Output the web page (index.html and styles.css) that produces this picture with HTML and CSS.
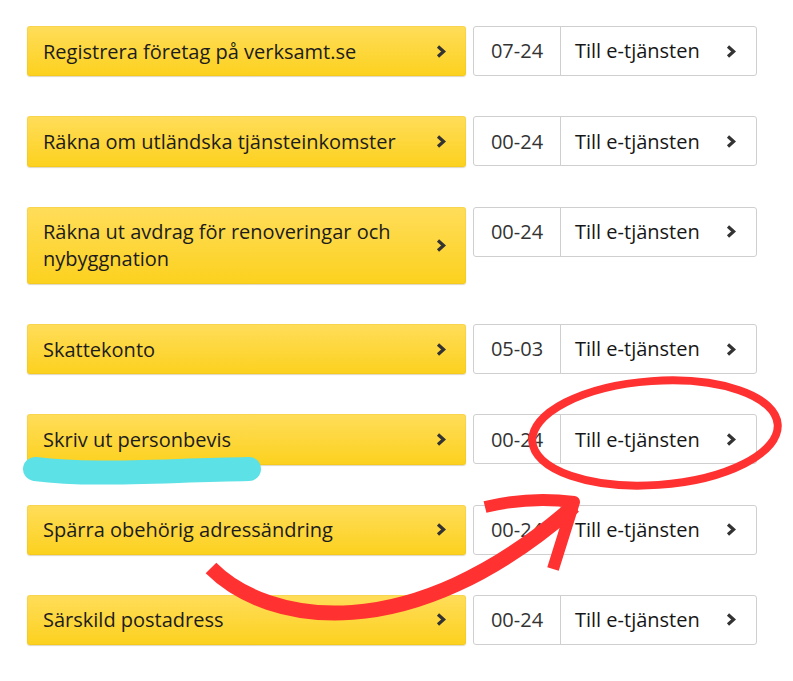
FILE: index.html
```html
<!DOCTYPE html>
<html lang="sv">
<head>
<meta charset="utf-8">
<title>E-tjänster</title>
<link rel="stylesheet" href="styles.css">
</head>
<body>
<main class="list">
  <div class="row">
    <a class="service" href="#"><span class="service-label">Registrera företag på verksamt.se</span><svg class="chev" viewBox="0 0 10 13"><path d="M2 1.5 L7.6 6.5 L2 11.5"/></svg></a>
    <div class="box"><span class="hours">07-24</span><a class="go" href="#"><span>Till e-tjänsten</span><svg class="chev" viewBox="0 0 10 13"><path d="M2 1.5 L7.6 6.5 L2 11.5"/></svg></a></div>
  </div>
  <div class="row">
    <a class="service" href="#"><span class="service-label">Räkna om utländska tjänsteinkomster</span><svg class="chev" viewBox="0 0 10 13"><path d="M2 1.5 L7.6 6.5 L2 11.5"/></svg></a>
    <div class="box"><span class="hours">00-24</span><a class="go" href="#"><span>Till e-tjänsten</span><svg class="chev" viewBox="0 0 10 13"><path d="M2 1.5 L7.6 6.5 L2 11.5"/></svg></a></div>
  </div>
  <div class="row">
    <a class="service" href="#"><span class="service-label">Räkna ut avdrag för renoveringar och nybyggnation</span><svg class="chev" viewBox="0 0 10 13"><path d="M2 1.5 L7.6 6.5 L2 11.5"/></svg></a>
    <div class="box"><span class="hours">00-24</span><a class="go" href="#"><span>Till e-tjänsten</span><svg class="chev" viewBox="0 0 10 13"><path d="M2 1.5 L7.6 6.5 L2 11.5"/></svg></a></div>
  </div>
  <div class="row">
    <a class="service" href="#"><span class="service-label">Skattekonto</span><svg class="chev" viewBox="0 0 10 13"><path d="M2 1.5 L7.6 6.5 L2 11.5"/></svg></a>
    <div class="box"><span class="hours">05-03</span><a class="go" href="#"><span>Till e-tjänsten</span><svg class="chev" viewBox="0 0 10 13"><path d="M2 1.5 L7.6 6.5 L2 11.5"/></svg></a></div>
  </div>
  <div class="row">
    <a class="service" href="#"><span class="service-label">Skriv ut personbevis</span><svg class="chev" viewBox="0 0 10 13"><path d="M2 1.5 L7.6 6.5 L2 11.5"/></svg></a>
    <div class="box"><span class="hours">00-24</span><a class="go" href="#"><span>Till e-tjänsten</span><svg class="chev" viewBox="0 0 10 13"><path d="M2 1.5 L7.6 6.5 L2 11.5"/></svg></a></div>
  </div>
  <div class="row">
    <a class="service" href="#"><span class="service-label">Spärra obehörig adressändring</span><svg class="chev" viewBox="0 0 10 13"><path d="M2 1.5 L7.6 6.5 L2 11.5"/></svg></a>
    <div class="box"><span class="hours">00-24</span><a class="go" href="#"><span>Till e-tjänsten</span><svg class="chev" viewBox="0 0 10 13"><path d="M2 1.5 L7.6 6.5 L2 11.5"/></svg></a></div>
  </div>
  <div class="row">
    <a class="service" href="#"><span class="service-label">Särskild postadress</span><svg class="chev" viewBox="0 0 10 13"><path d="M2 1.5 L7.6 6.5 L2 11.5"/></svg></a>
    <div class="box"><span class="hours">00-24</span><a class="go" href="#"><span>Till e-tjänsten</span><svg class="chev" viewBox="0 0 10 13"><path d="M2 1.5 L7.6 6.5 L2 11.5"/></svg></a></div>
  </div>
</main>
<svg class="annotations" viewBox="0 0 793 681" aria-hidden="true">
  <path class="marker" d="M35 469 C 90 476, 150 471, 249 469"/>
  <ellipse class="circle" cx="655" cy="433" rx="123" ry="52" transform="rotate(-4 655 433)"/>
  <path class="arrow" d="M211 568 C 268 625, 410 650, 574 506"/>
  <path class="arrow-head" d="M485 507 Q 530 496 574 502 L 553 569"/>
</svg>
</body>
</html>
```
FILE: styles.css
```css
* { box-sizing: border-box; }

html, body {
  margin: 0;
  background: #ffffff;
}

body {
  position: relative;
  width: 793px;
  height: 681px;
  overflow: hidden;
  font-family: "Open Sans", "Noto Sans", sans-serif;
  font-size: 20px;
  line-height: 27.25px;
  color: #1b1b1b;
}

.list {
  padding: 26px 0 0 27px;
  display: flex;
  flex-direction: column;
  gap: 40px;
}

.row {
  display: flex;
  align-items: flex-start;
  gap: 7px;
}

.service {
  width: 439px;
  display: flex;
  align-items: center;
  justify-content: space-between;
  gap: 12px;
  padding: 11.5px 20px 11.5px 16px;
  border-radius: 3px;
  background: linear-gradient(#ffdd5a, #fcd11e);
  box-shadow: 0 1px 1px rgba(120, 90, 0, 0.25), inset 0 0 0 1px rgba(200, 160, 0, 0.12);
  color: #1c1c1c;
  text-decoration: none;
}

.chev {
  flex: none;
  width: 10px;
  height: 13px;
}

.chev path {
  fill: none;
  stroke: #333333;
  stroke-width: 3.2;
  stroke-linecap: butt;
  stroke-linejoin: miter;
}

.box {
  width: 284px;
  height: 50px;
  display: flex;
  border: 1px solid #cfcfcf;
  border-radius: 3px;
  background: #ffffff;
}

.hours {
  width: 87px;
  display: flex;
  align-items: center;
  justify-content: center;
  border-right: 1px solid #cfcfcf;
  color: #333333;
}

.go {
  flex: 1;
  display: flex;
  align-items: center;
  justify-content: space-between;
  padding: 0 20px 0 14px;
  color: #161616;
  text-decoration: none;
}

.annotations {
  position: absolute;
  left: 0;
  top: 0;
  width: 793px;
  height: 681px;
  pointer-events: none;
}

.marker {
  fill: none;
  stroke: #5ce1e6;
  stroke-width: 24;
  stroke-linecap: round;
}

.circle {
  fill: none;
  stroke: #ff3131;
  stroke-width: 8;
}

.arrow {
  fill: none;
  stroke: #ff3131;
  stroke-width: 15;
  stroke-linecap: butt;
}

.arrow-head {
  fill: none;
  stroke: #ff3131;
  stroke-width: 12;
  stroke-linecap: butt;
  stroke-linejoin: round;
}
```
